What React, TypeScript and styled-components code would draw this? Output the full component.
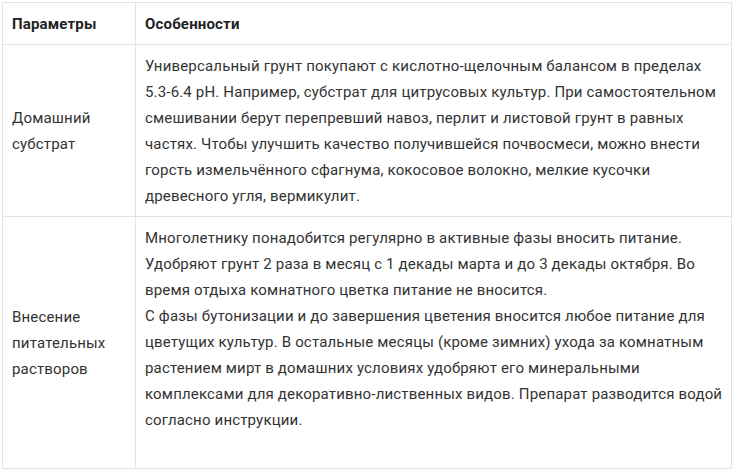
import styled, { createGlobalStyle } from 'styled-components'

const GlobalStyle = createGlobalStyle`
  body {
    margin: 0;
    background: #fff;
    font-family: Roboto, 'Noto Sans', sans-serif;
  }
`

const Page = styled.div`
  padding: 2px 2px 0 2px;
`

const Table = styled.table`
  width: 730px;
  table-layout: fixed;
  border-collapse: collapse;
  font-size: 15px;
  line-height: 26px;
  letter-spacing: 0.17px;
  color: #333;
`

const HeadCell = styled.th<{ $width?: string }>`
  width: ${(props) => props.$width || 'auto'};
  height: 41px;
  padding: 0 9px;
  border: 1px solid #e2e2ea;
  text-align: left;
  font-weight: 700;
  color: #222;
  vertical-align: middle;
`

const Cell = styled.td<{ $padBottom?: string }>`
  padding: 8px 8px ${(props) => props.$padBottom || '8px'} 9px;
  border: 1px solid #e2e2ea;
  vertical-align: middle;
`

const Param = styled(Cell)`
  padding-right: 4px;
`

const rows = [
  {
    param: 'Домашний субстрат',
    text: [
      'Универсальный грунт покупают с кислотно-щелочным балансом в пределах 5.3-6.4 pH. Например, субстрат для цитрусовых культур. При самостоятельном смешивании берут перепревший навоз, перлит и листовой грунт в равных частях. Чтобы улучшить качество получившейся почвосмеси, можно внести горсть измельчённого сфагнума, кокосовое волокно, мелкие кусочки древесного угля, вермикулит.',
    ],
    padBottom: '7px',
  },
  {
    param: 'Внесение питательных растворов',
    text: [
      'Многолетнику понадобится регулярно в активные фазы вносить питание. Удобряют грунт 2 раза в месяц с 1 декады марта и до 3 декады октября. Во время отдыха комнатного цветка питание не вносится.',
      'С фазы бутонизации и до завершения цветения вносится любое питание для цветущих культур. В остальные месяцы (кроме зимних) ухода за комнатным растением мирт в домашних условиях удобряют его минеральными комплексами для декоративно-лиственных видов. Препарат разводится водой согласно инструкции.',
    ],
    padBottom: '35px',
  },
]

export default function App() {
  return (
    <>
      <GlobalStyle />
      <Page>
        <Table>
          <thead>
            <tr>
              <HeadCell $width="114px">Параметры</HeadCell>
              <HeadCell>Особенности</HeadCell>
            </tr>
          </thead>
          <tbody>
            {rows.map((row) => (
              <tr key={row.param}>
                <Param>{row.param}</Param>
                <Cell $padBottom={row.padBottom}>
                  {row.text.map((t, i) => (
                    <div key={i}>{t}</div>
                  ))}
                </Cell>
              </tr>
            ))}
          </tbody>
        </Table>
      </Page>
    </>
  )
}
